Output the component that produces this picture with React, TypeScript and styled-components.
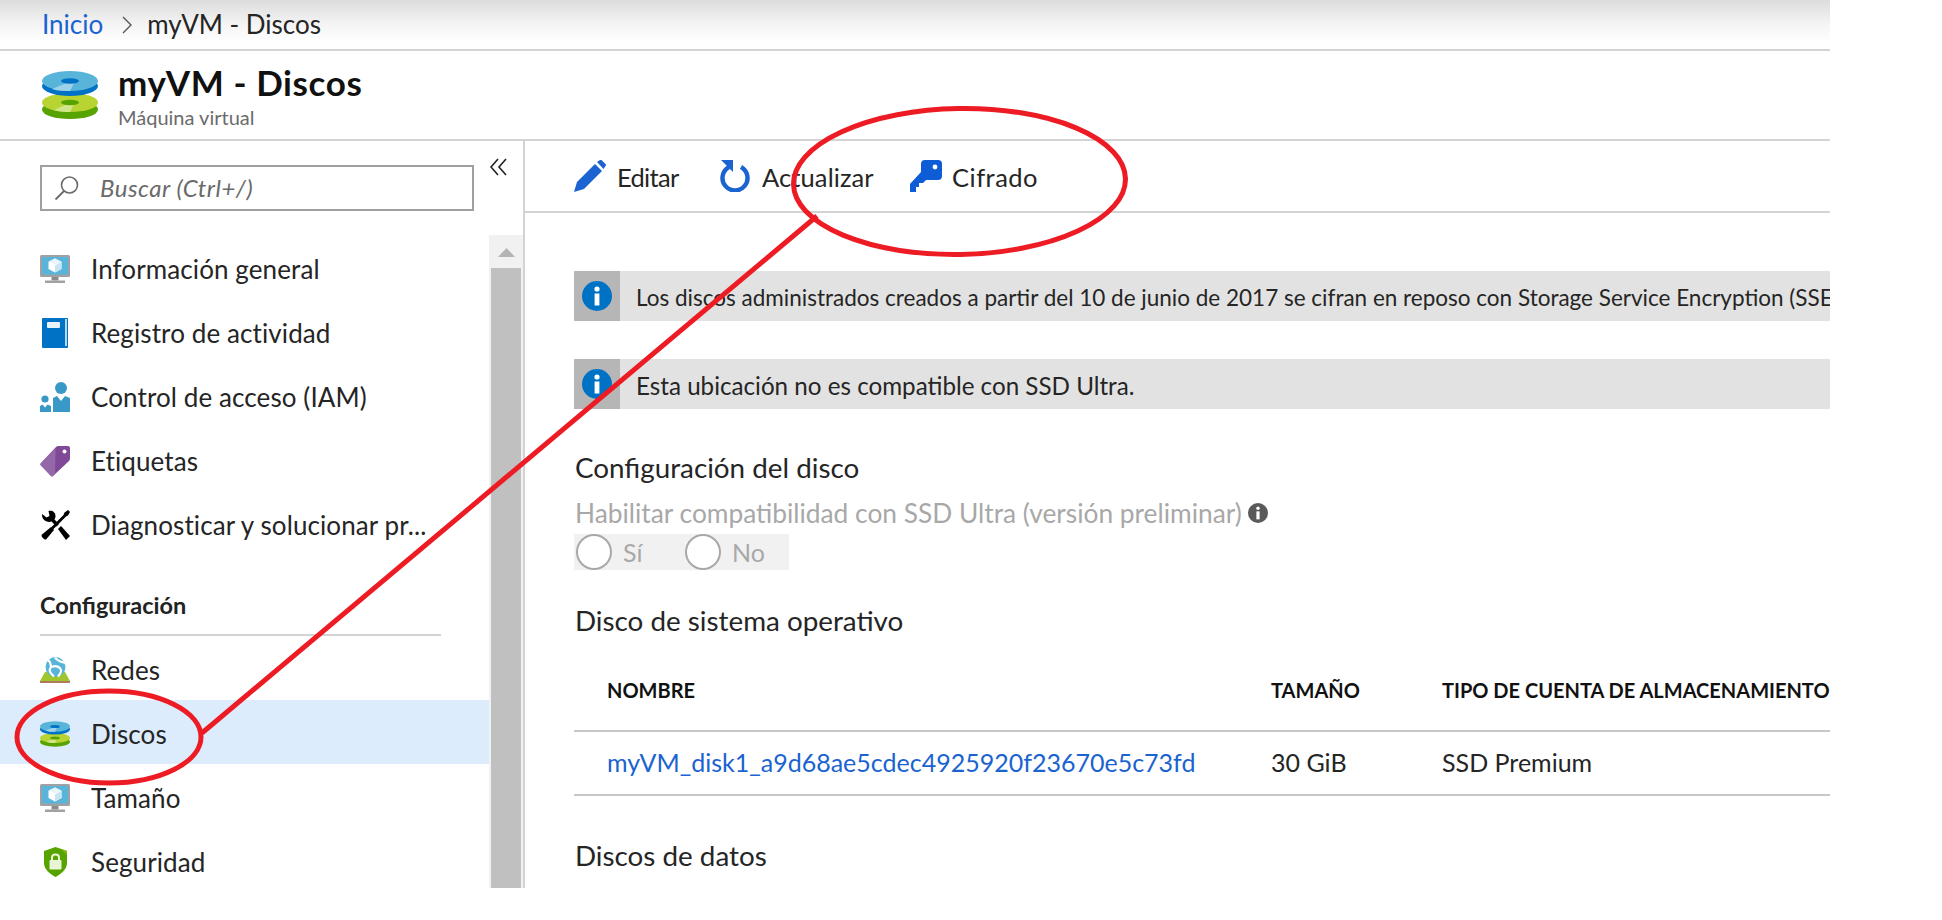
import React from "react";
import styled, { createGlobalStyle } from "styled-components";

const Global = createGlobalStyle`
  html, body { margin: 0; padding: 0; background: #fff; }
  body { font-family: "Lato", "Open Sans", "Liberation Sans", sans-serif; color: #252525; }
`;

const Page = styled.div`
  position: relative;
  width: 1830px;
  height: 888px;
  overflow: hidden;
  background: #fff;
  display: flex;
  flex-direction: column;
`;
const Breadcrumb = styled.nav`
  height: 49px;
  flex: none;
  box-sizing: content-box;
  display: flex;
  align-items: center;
  padding-left: 42px;
  background: linear-gradient(#dcdcdc 0, #f4f4f4 24px, #ffffff 42px);
  border-bottom: 2px solid #d3d3d3;
  font-size: 26px;
  line-height: 46px;
`;
const Crumb = styled.a`
  color: #1a63d0;
  margin-top: -2px;
`;
const Current = styled.span`
  color: #252525;
  margin-top: -2px;
`;
const ChevronBox = styled.svg`
  margin: 0 15px 0 19px;
`;
const Header = styled.header`
  height: 88px;
  flex: none;
  display: flex;
  align-items: center;
  padding-left: 42px;
  gap: 20px;
  border-bottom: 2px solid #d3d3d3;
`;
const HeaderText = styled.div`
  display: flex;
  flex-direction: column;
`;
const Title = styled.h1`
  margin: 0 0 2px;
  font-size: 35px;
  letter-spacing: 0.6px;
  line-height: 42px;
  font-weight: 700;
  color: #111;
`;
const Subtitle = styled.div`
  font-size: 20px;
  line-height: 24px;
  color: #6b6b6b;
`;
const Body = styled.div`
  flex: 1;
  min-height: 0;
  display: flex;
`;
const Sidebar = styled.aside`
  width: 523px;
  flex: none;
  display: flex;
  flex-direction: column;
  border-right: 2px solid #d3d3d3;
`;
const SearchRow = styled.div`
  height: 94px;
  flex: none;
  display: flex;
  align-items: flex-start;
  padding: 24px 0 0 40px;
  box-sizing: border-box;
`;
const SearchBox = styled.div`
  width: 434px;
  height: 46px;
  box-sizing: border-box;
  border: 2px solid #a0a0a0;
  display: flex;
  align-items: center;
  padding-left: 12px;
  gap: 20px;
`;
const SearchText = styled.span`
  font-style: italic;
  font-size: 24px;
  letter-spacing: 0.5px;
  color: #6a6a6a;
  margin-top: -2px;
`;
const CollapseIcon = styled.svg`
  margin: -7px 0 0 16px;
`;
const SideBody = styled.div`
  flex: 1;
  min-height: 0;
  display: flex;
`;
const NavList = styled.div`
  flex: 1;
  padding-top: 2px;
  overflow: hidden;
`;
const NavRow = styled.div<{ $active?: boolean; $lower?: boolean }>`
  height: 64px;
  box-sizing: border-box;
  display: flex;
  align-items: center;
  padding: ${(p) => (p.$lower ? "3px 0 0 40px" : "0 0 1px 40px")};
  background: ${(p) => (p.$active ? "#dcecfc" : "transparent")};
  font-size: 26px;
  letter-spacing: 0.1px;
  color: #252525;
`;
const NavIcon = styled.span`
  width: 30px;
  height: 32px;
  margin-right: 21px;
  display: flex;
  align-items: center;
  justify-content: center;
  flex: none;
`;
const SectionHead = styled.div`
  height: 79px;
  margin: 0 48px 0 40px;
  box-sizing: border-box;
  padding-top: 32px;
  border-bottom: 2px solid #d3d3d3;
  font-size: 23.5px;
  line-height: 32px;
  font-weight: 700;
  color: #222;
`;
const Scrollbar = styled.div`
  width: 34px;
  flex: none;
  background: #f1f1f1;
  display: flex;
  flex-direction: column;
  align-items: center;
`;
const ScrollArrow = styled.svg`
  margin: 13px 0 11px;
  flex: none;
`;
const ScrollThumb = styled.div`
  width: 30px;
  flex: 1;
  background: #c0c0c0;
`;
const Main = styled.main`
  flex: 1;
  min-width: 0;
  display: flex;
  flex-direction: column;
`;
const Toolbar = styled.div`
  height: 70px;
  flex: none;
  display: flex;
  align-items: center;
  padding-left: 49px;
  border-bottom: 2px solid #d3d3d3;
`;
const ToolButton = styled.div<{ $gap: number; $width: number; $ls: number }>`
  display: flex;
  align-items: center;
  gap: ${(p) => p.$gap}px;
  width: ${(p) => p.$width}px;
  font-size: 25.5px;
  letter-spacing: ${(p) => p.$ls}px;
  color: #252525;
`;
const ToolLabel = styled.span`
  padding-top: 2px;
`;
const Content = styled.div`
  padding: 58px 0 0 49px;
  display: flex;
  flex-direction: column;
  align-items: stretch;
`;
const Banner = styled.div`
  height: 50px;
  background: #e2e2e2;
  display: flex;
  align-items: center;
  overflow: hidden;
  margin-bottom: 38px;
`;
const BannerIcon = styled.div`
  width: 46px;
  height: 50px;
  flex: none;
  background: #b6b6b6;
  display: flex;
  align-items: center;
  justify-content: center;
`;
const BannerText = styled.span<{ $size: number }>`
  margin-left: 16px;
  padding-top: 2px;
  font-size: ${(p) => p.$size}px;
  white-space: nowrap;
  color: #252525;
`;
const SectionTitle = styled.h2<{ $top: number }>`
  margin: ${(p) => p.$top}px 0 0 1px;
  font-size: 27.8px;
  line-height: 32px;
  font-weight: 400;
  color: #252525;
`;
const FieldLabel = styled.div`
  margin: 15px 0 0 1px;
  font-size: 26.3px;
  line-height: 28px;
  color: #a8a8a8;
  display: flex;
  align-items: center;
  gap: 6px;
`;
const RadioGroup = styled.div`
  margin-top: 7px;
  width: 215px;
  height: 36px;
  background: #f1f1f1;
  display: flex;
  align-items: center;
  padding-left: 2px;
  box-sizing: border-box;
`;
const RadioOption = styled.label<{ $width: number }>`
  width: ${(p) => p.$width}px;
  display: flex;
  align-items: center;
  gap: 11px;
  font-size: 25px;
  color: #a8a8a8;
`;
const RadioCircle = styled.span`
  width: 36px;
  height: 36px;
  box-sizing: border-box;
  border-radius: 50%;
  border: 2px solid #a8a8a8;
  background: #fff;
  flex: none;
`;
const TableGrid = styled.div`
  margin-top: 13px;
  display: grid;
  grid-template-columns: 697px 171px 1fr;
`;
const HeadCell = styled.div<{ $first?: boolean }>`
  height: 80px;
  display: flex;
  align-items: center;
  padding-left: ${(p) => (p.$first ? 33 : 0)}px;
  border-bottom: 2px solid #c8c8c8;
  font-size: 20px;
  font-weight: 700;
  color: #111;
  white-space: nowrap;
`;
const DataCell = styled.div<{ $first?: boolean }>`
  height: 62px;
  box-sizing: border-box;
  display: flex;
  align-items: center;
  padding-left: ${(p) => (p.$first ? 33 : 0)}px;
  padding-bottom: 3px;
  font-size: 25px;
  color: #252525;
`;
const RowRule = styled.div`
  grid-column: 1 / -1;
  height: 2px;
  background: #c8c8c8;
`;
const LinkText = styled.a`
  color: #1a63d0;
`;
const Annotation = styled.svg`
  position: absolute;
  left: 0;
  top: 0;
  pointer-events: none;
`;

const DiskIcon = ({ w, h }: { w: number; h: number }) => (
  <svg width={w} height={h} viewBox="0 0 56 48">
    <ellipse cx="28" cy="38.5" rx="28" ry="9.5" fill="#57a300" />
    <ellipse cx="28" cy="31.5" rx="28" ry="9.5" fill="#b8d432" />
    <path d="M12 39 C18 41 24 41 28 41 L32 33 L25 33 Z" fill="#d3e58a" />
    <ellipse cx="28" cy="31.5" rx="9" ry="2.8" fill="#57a300" />
    <ellipse cx="28" cy="15" rx="28" ry="10" fill="#0072c6" />
    <ellipse cx="28" cy="10" rx="28" ry="10" fill="#59b4d9" />
    <path d="M10 18 C16 20 23 20 28 20 L32 12 L25 12 Z" fill="#9cd2e9" />
    <ellipse cx="28" cy="10" rx="9" ry="2.8" fill="#0072c6" />
  </svg>
);
const MonitorIcon = () => (
  <svg width="30" height="28" viewBox="0 0 30 28">
    <rect x="0" y="0" width="30" height="22" rx="1.5" fill="#a0a1a2" />
    <rect x="2" y="2" width="26" height="17.5" fill="#59b4d9" />
    <rect x="11.5" y="22" width="7" height="3.5" fill="#8a8b8c" />
    <rect x="5" y="25.5" width="20" height="2.5" fill="#a0a1a2" />
    <path d="M15 3.5 L21.5 6.7 V14 L15 17.5 L8.5 14 V6.7 Z" fill="#fff" />
    <path d="M15 10.5 V17.5 L21.5 14 V6.7 Z" fill="#c6e5f2" />
    <path d="M15 3.5 L21.5 6.7 L15 9.6 L8.5 6.7 Z" fill="#e8f5fa" />
  </svg>
);
const BookIcon = () => (
  <svg width="28" height="30" viewBox="0 0 28 30">
    <rect x="1" y="0" width="26" height="30" rx="1" fill="#0072c6" />
    <rect x="24" y="1" width="2" height="27" fill="#b3d8f0" />
    <rect x="6" y="4" width="13" height="6" rx="1" fill="#e8f3fb" />
  </svg>
);
const PeopleIcon = () => (
  <svg width="30" height="30" viewBox="0 0 30 30">
    <circle cx="21" cy="6" r="6" fill="#3999c6" />
    <path d="M13 16 L17 14 L21 19 L25 14 L30 16 V30 H13 Z" fill="#3999c6" />
    <circle cx="5" cy="17" r="3.6" fill="#3999c6" />
    <path d="M0 24 L2.5 22.5 L5 25.5 L7.5 22.5 L11 24 V30 H0 Z" fill="#3999c6" />
  </svg>
);
const TagIcon = () => (
  <svg width="30" height="32" viewBox="0 0 30 32">
    <path d="M18 1 H28 Q30 1 30 3 V13 Q30 15 29 16 L13 31 Q12 31.5 11 31 L0.5 20 Q0 19 1 18 L16 2 Q17 1 18 1 Z" fill="#804998" />
    <path d="M15.5 3 L1 18 Q0 19 .5 20 L11 31 Q12 31.5 13 31 L15 29 Z" fill="#9468a8" />
    <circle cx="24.5" cy="6.5" r="2" fill="#fff" />
  </svg>
);
const ToolsIcon = () => (
  <svg width="29" height="30" viewBox="0 0 29 30">
    <path d="M1 4 L5.5 7.5 L8.5 6 L7.5 1 C11 0 14.5 2 14.5 6 C14.5 7.5 14 8.5 13.5 9.5 L18 14 L15.5 16.5 L10.5 11.5 C6 13 0.5 10 1 4 Z" fill="#000" />
    <path d="M27 0 L29 2 L27 5.5 L25 6.5 L12 19.5 L10 17.5 L22.5 5 L23.5 2.5 Z" fill="#000" />
    <path d="M10 17 L13 20 L5.5 29 Q4.5 30 3 29 L1 27 Q0 25.5 1 24.5 Z" fill="#000" />
    <path d="M17 19 L20 16 L29 26 L25 30 Z" fill="#000" />
  </svg>
);
const GlobeIcon = () => (
  <svg width="30" height="26" viewBox="0 0 30 26">
    <path d="M5 15 H25 L30 24 H0 Z" fill="#9fc62f" />
    <rect x="0" y="24" width="30" height="2" fill="#b07a5a" />
    <circle cx="15.5" cy="10" r="10" fill="#59b4d9" />
    <path d="M8 2.5 C11 6 12 9 10 12 C9 14 11 17 14 19.5 M15 0.5 C17 4 22 5 25 6 M12 10 C16 8 20 10 21 13 C21.5 15 20 17 18 19.5" stroke="#fff" strokeWidth="2.2" fill="none" />
  </svg>
);
const ShieldIcon = () => (
  <svg width="23" height="30" viewBox="0 0 23 30">
    <path d="M11.5 0 L23 4 V16 C23 23 16 27.5 11.5 30 C7 27.5 0 23 0 16 V4 Z" fill="#57a300" />
    <path d="M11.5 0 L23 4 V8 L17 2 Z" fill="#7fba00" />
    <rect x="5.5" y="13" width="12" height="9.5" rx="1" fill="#e9f4d6" />
    <path d="M8 13 V10.5 C8 6.5 15 6.5 15 10.5 V13" fill="none" stroke="#e9f4d6" strokeWidth="2" />
  </svg>
);
const InfoCircle = ({ size, fill }: { size: number; fill: string }) => (
  <svg width={size} height={size} viewBox="0 0 30 30">
    <circle cx="15" cy="15" r="15" fill={fill} />
    <circle cx="15" cy="8" r="2.6" fill="#fff" />
    <rect x="12.6" y="12.5" width="4.8" height="12" fill="#fff" />
  </svg>
);

const items = [
  { label: "Información general", icon: <MonitorIcon /> },
  { label: "Registro de actividad", icon: <BookIcon /> },
  { label: "Control de acceso (IAM)", icon: <PeopleIcon /> },
  { label: "Etiquetas", icon: <TagIcon /> },
  { label: "Diagnosticar y solucionar pr...", icon: <ToolsIcon /> },
];

export default function App() {
  return (
    <Page>
      <Global />
      <Breadcrumb>
        <Crumb>Inicio</Crumb>
        <ChevronBox width="10" height="18" viewBox="0 0 10 18">
          <path d="M1 1 L9 9 L1 17" fill="none" stroke="#555" strokeWidth="1.4" />
        </ChevronBox>
        <Current>myVM - Discos</Current>
      </Breadcrumb>
      <Header>
        <DiskIcon w={56} h={48} />
        <HeaderText>
          <Title>myVM - Discos</Title>
          <Subtitle>Máquina virtual</Subtitle>
        </HeaderText>
      </Header>
      <Body>
        <Sidebar>
          <SearchRow>
            <SearchBox>
              <svg width="26" height="26" viewBox="0 0 26 26">
                <circle cx="15.5" cy="10" r="8" fill="none" stroke="#6a6a6a" strokeWidth="1.6" />
                <path d="M10 16 L1.5 24.5" stroke="#6a6a6a" strokeWidth="1.8" />
              </svg>
              <SearchText>Buscar (Ctrl+/)</SearchText>
            </SearchBox>
            <CollapseIcon width="17" height="18" viewBox="0 0 17 18">
              <path d="M8 1 L1 9 L8 17 M16 1 L9 9 L16 17" fill="none" stroke="#222" strokeWidth="1.6" />
            </CollapseIcon>
          </SearchRow>
          <SideBody>
            <NavList>
              {items.map((it) => (
                <NavRow key={it.label}>
                  <NavIcon>{it.icon}</NavIcon>
                  {it.label}
                </NavRow>
              ))}
              <SectionHead>Configuración</SectionHead>
              <NavRow $lower>
                <NavIcon><GlobeIcon /></NavIcon>Redes
              </NavRow>
              <NavRow $active $lower>
                <NavIcon><DiskIcon w={30} h={26} /></NavIcon>Discos
              </NavRow>
              <NavRow $lower>
                <NavIcon><MonitorIcon /></NavIcon>Tamaño
              </NavRow>
              <NavRow $lower>
                <NavIcon><ShieldIcon /></NavIcon>Seguridad
              </NavRow>
            </NavList>
            <Scrollbar>
              <ScrollArrow width="17" height="9" viewBox="0 0 17 9">
                <path d="M8.5 0 L17 9 H0 Z" fill="#b4b4b4" />
              </ScrollArrow>
              <ScrollThumb />
            </Scrollbar>
          </SideBody>
        </Sidebar>
        <Main>
          <Toolbar>
            <ToolButton $gap={11} $width={146} $ls={-0.7}>
              <svg width="32" height="32" viewBox="0 0 32 32">
                <path d="M0 32 L3 22 L21 4 L28 11 L10 29 Z" fill="#1a63d0" />
                <path d="M23 2 L26 0 Q27 -.5 28 .5 L31.5 4 Q32.5 5 31.5 6 L29.5 9 Z" fill="#1a63d0" />
              </svg>
              <ToolLabel>Editar</ToolLabel>
            </ToolButton>
            <ToolButton $gap={12} $width={190} $ls={0.1}>
              <svg width="30" height="32" viewBox="0 0 30 32">
                <path d="M9 7 A12.5 12.5 0 1 0 21 7" fill="none" stroke="#1a63d0" strokeWidth="4.4" />
                <path d="M1 0 H13 V12 L9 8 Z" fill="#1a63d0" />
              </svg>
              <ToolLabel>Actualizar</ToolLabel>
            </ToolButton>
            <ToolButton $gap={10} $width={140} $ls={0.5}>
              <svg width="32" height="32" viewBox="0 0 32 32">
                <path d="M15 0 H28 Q32 0 32 4 V16 Q32 20 28 20 H16 L13 23 H9 V27 H6 V32 H0 V24 L11 12 V4 Q11 0 15 0 Z" fill="#0d5ed6" />
                <circle cx="25" cy="7" r="2.4" fill="#fff" />
              </svg>
              <ToolLabel>Cifrado</ToolLabel>
            </ToolButton>
          </Toolbar>
          <Content>
            <Banner>
              <BannerIcon><InfoCircle size={30} fill="#0072c6" /></BannerIcon>
              <BannerText $size={22.5}>Los discos administrados creados a partir del 10 de junio de 2017 se cifran en reposo con Storage Service Encryption (SSE).</BannerText>
            </Banner>
            <Banner>
              <BannerIcon><InfoCircle size={30} fill="#0072c6" /></BannerIcon>
              <BannerText $size={24.2}>Esta ubicación no es compatible con SSD Ultra.</BannerText>
            </Banner>
            <SectionTitle $top={5}>Configuración del disco</SectionTitle>
            <FieldLabel>
              Habilitar compatibilidad con SSD Ultra (versión preliminar)
              <InfoCircle size={20} fill="#5a5a5a" />
            </FieldLabel>
            <RadioGroup>
              <RadioOption $width={109}>
                <RadioCircle />Sí
              </RadioOption>
              <RadioOption $width={100}>
                <RadioCircle />No
              </RadioOption>
            </RadioGroup>
            <SectionTitle $top={35}>Disco de sistema operativo</SectionTitle>
            <TableGrid>
              <HeadCell $first>NOMBRE</HeadCell>
              <HeadCell>TAMAÑO</HeadCell>
              <HeadCell>TIPO DE CUENTA DE ALMACENAMIENTO</HeadCell>
              <DataCell $first><LinkText>myVM_disk1_a9d68ae5cdec4925920f23670e5c73fd</LinkText></DataCell>
              <DataCell>30 GiB</DataCell>
              <DataCell>SSD Premium</DataCell>
              <RowRule />
            </TableGrid>
            <SectionTitle $top={44}>Discos de datos</SectionTitle>
          </Content>
        </Main>
      </Body>
      <Annotation width="1830" height="888" viewBox="0 0 1830 888">
        <g fill="none" stroke="#ed1c24" strokeWidth="5">
          <ellipse cx="959.5" cy="181.5" rx="166" ry="73" transform="rotate(-1 959.5 181.5)" />
          <ellipse cx="109" cy="737" rx="92" ry="46" />
          <path d="M817 216 L202 733" />
        </g>
      </Annotation>
    </Page>
  );
}
